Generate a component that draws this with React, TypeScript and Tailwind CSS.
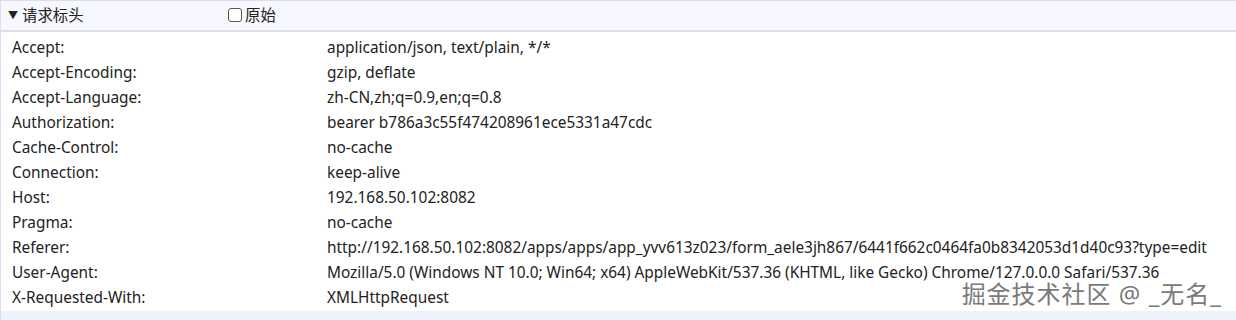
const headers: [string, string][] = [
  ["Accept:", "application/json, text/plain, */*"],
  ["Accept-Encoding:", "gzip, deflate"],
  ["Accept-Language:", "zh-CN,zh;q=0.9,en;q=0.8"],
  ["Authorization:", "bearer b786a3c55f474208961ece5331a47cdc"],
  ["Cache-Control:", "no-cache"],
  ["Connection:", "keep-alive"],
  ["Host:", "192.168.50.102:8082"],
  ["Pragma:", "no-cache"],
  [
    "Referer:",
    "http://192.168.50.102:8082/apps/apps/app_yvv613z023/form_aele3jh867/6441f662c0464fa0b8342053d1d40c93?type=edit",
  ],
  [
    "User-Agent:",
    "Mozilla/5.0 (Windows NT 10.0; Win64; x64) AppleWebKit/537.36 (KHTML, like Gecko) Chrome/127.0.0.0 Safari/537.36",
  ],
  ["X-Requested-With:", "XMLHttpRequest"],
]

export default function App() {
  return (
    <div
      className="relative h-[320px] w-[1236px] overflow-hidden bg-white text-[15.4px] text-[#222]"
      style={{ fontFamily: '"Noto Sans", "Noto Sans CJK SC", sans-serif' }}
    >
      <div className="border-t border-l border-[#dcdcee] h-full flex flex-col">
        {/* section header */}
        <div className="flex h-[32px] items-center bg-[#f7f8fd] border-b-2 border-[#dedde8]">
          <div className="flex w-[220px] items-center pl-[7px]">
            <span className="text-[10px] mr-[4px] text-[#222]">▼</span>
            <span>请求标头</span>
          </div>
          <label className="flex items-center ml-[7px]">
            <span className="inline-block h-[14px] w-[14px] rounded-[3px] border border-[#555] bg-white mr-[3px]" />
            <span>原始</span>
          </label>
        </div>

        <div className="flex flex-col pt-[4px] leading-[20px]">
          {headers.map(([k, v]) => (
            <div key={k} className="flex h-[25px] items-center">
              <div className="w-[326px] pl-[11px] shrink-0">{k}</div>
              <div className="whitespace-nowrap">{v}</div>
            </div>
          ))}
        </div>

        <div className="mt-auto h-[10px] bg-[#eef2fb]" />
      </div>

      <div
        className="absolute right-[14px] top-[283px] text-[24px] leading-[22px] text-[#7a7a7a] tracking-[1px]"
        style={{ textShadow: "0 0 1px #fff, 0 0 2px #fff" }}
      >
        掘金技术社区 @ _无名_
      </div>
    </div>
  )
}
